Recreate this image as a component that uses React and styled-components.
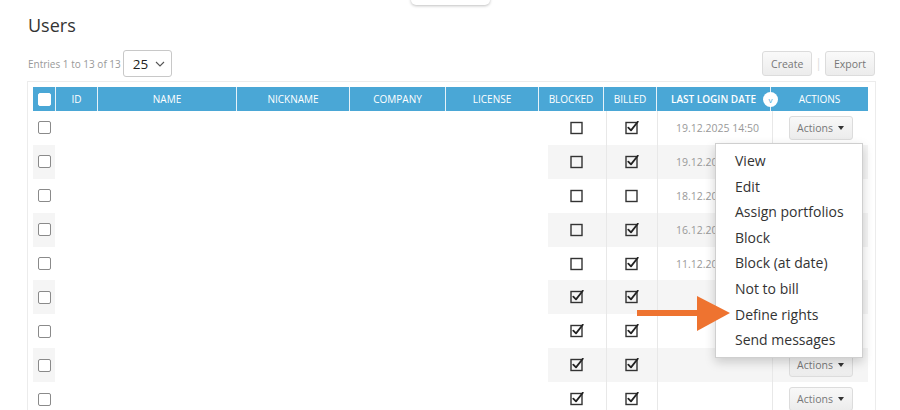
import React from "react";
import styled, { createGlobalStyle } from "styled-components";

const GlobalStyle = createGlobalStyle`
  html, body {
    margin: 0;
    padding: 0;
    background: #fff;
    font-family: "Open Sans", "Liberation Sans", sans-serif;
    color: #333;
    overflow: hidden;
  }
`;

const Page = styled.div`
  position: relative;
  width: 900px;
  height: 410px;
  overflow: hidden;
  padding: 0 24px 0 27px;
  box-sizing: border-box;
`;

const TopTab = styled.div`
  position: absolute;
  left: 411px;
  top: -6px;
  width: 79px;
  height: 11px;
  background: #fff;
  border-radius: 0 0 5px 5px;
  box-shadow: 0 1px 3px rgba(0, 0, 0, 0.25);
`;

const Title = styled.h1`
  margin: 0;
  padding: 13px 0 0 1px;
  font-size: 18px;
  font-weight: 400;
  line-height: 24px;
  color: #333;
`;

const Toolbar = styled.div`
  display: flex;
  align-items: center;
  justify-content: space-between;
  margin-top: 13px;
  height: 27px;
`;

const EntriesInfo = styled.div`
  display: flex;
  align-items: center;
  gap: 2px;
  font-size: 10px;
  color: #999;
  padding-left: 1px;
`;

const Select = styled.div`
  display: flex;
  align-items: center;
  justify-content: space-between;
  width: 49px;
  height: 27px;
  box-sizing: border-box;
  border: 1px solid #c8c8c8;
  border-radius: 3px;
  padding: 0 6px 0 9px;
  font-size: 13.5px;
  color: #222;
`;

const ButtonGroup = styled.div`
  display: flex;
  align-items: center;
  gap: 3px;
  margin-right: 1px;
`;

const Button = styled.div`
  display: flex;
  align-items: center;
  justify-content: center;
  height: 25px;
  padding: 0 8px;
  box-sizing: border-box;
  border: 1px solid #dcdcdc;
  border-radius: 3px;
  background: linear-gradient(#fafafa, #ececec);
  font-size: 10.5px;
  color: #777;
`;

const Sep = styled.span`
  color: #ddd;
  font-size: 12px;
`;

const Panel = styled.div`
  position: relative;
  margin-top: 4px;
  border: 1px solid #ececec;
  border-bottom: none;
  padding: 5px 7px 0 5px;
  height: 340px;
  box-sizing: border-box;
`;

const HeaderRow = styled.div`
  display: grid;
  grid-template-columns: 23px 42px 139px 113px 96px 93px 65px 53px 114px 97px;
  height: 24px;
  background: #4aa7d6;
`;

const HeadCell = styled.div`
  position: relative;
  display: flex;
  align-items: center;
  justify-content: center;
  border-right: ${({ $last }) => ($last ? "none" : "1px solid #e6f2f9")};
  font-size: 10px;
  font-weight: ${({ $bold }) => ($bold ? 600 : 400)};
  color: #fff;
`;

const SortBadge = styled.div`
  position: absolute;
  right: -8px;
  top: 5px;
  width: 15px;
  height: 15px;
  border-radius: 50%;
  background: #fff;
  color: #4aa7d6;
  font-size: 8px;
  font-weight: 400;
  display: flex;
  align-items: center;
  justify-content: center;
  z-index: 2;
`;

const Box = styled.span`
  display: inline-block;
  width: 13px;
  height: 13px;
  box-sizing: border-box;
  border: 1px solid ${({ $light }) => ($light ? "#fff" : "#8a8a8a")};
  background: #fff;
  border-radius: 2px;
`;

const BodyRow = styled.div`
  display: grid;
  grid-template-columns: 22px 493px 58px 51px 115px 96px;
  height: 33.9px;
`;

const Cell = styled.div`
  position: relative;
  display: flex;
  align-items: center;
  justify-content: ${({ $left }) => ($left ? "flex-start" : "center")};
  padding-left: ${({ $left }) => ($left ? "18px" : "0")};
  background: ${({ $striped, $blank }) => ($striped && !$blank ? "#f5f5f5" : "#fff")};
  border-left: ${({ $line }) => ($line ? "1px solid #e8e8e8" : "none")};
  font-size: 10.5px;
  color: #999;
  white-space: nowrap;
`;

const ActionsButton = styled(Button)`
  width: 64px;
  height: 24px;
  padding: 0;
  gap: 5px;
  background: linear-gradient(#f8f8f8, #ececec);
`;

const Caret = styled.span`
  width: 0;
  height: 0;
  border-left: 3.5px solid transparent;
  border-right: 3.5px solid transparent;
  border-top: 4px solid #333;
`;

const Menu = styled.ul`
  position: absolute;
  left: -58px;
  top: 32px;
  width: 146px;
  margin: 0;
  padding: 4px 0;
  list-style: none;
  background: #fff;
  border: 1px solid #cfcfcf;
  box-shadow: 0 4px 10px rgba(0, 0, 0, 0.18);
  z-index: 5;
`;

const MenuItem = styled.li`
  height: 25.6px;
  line-height: 25.6px;
  padding-left: 19px;
  font-size: 14px;
  color: #333;
`;

const Arrow = styled.svg`
  position: absolute;
  left: 636px;
  top: 295px;
  z-index: 10;
`;

const CheckIcon = ({ checked }) => (
  <svg width="14" height="14" viewBox="0 0 14 14">
    <rect x="1" y="1.5" width="11" height="11" fill="none" stroke="#333" strokeWidth="1.4" />
    {checked && (
      <path d="M3.3 6.6 L6 9.4 L12.8 0.8" fill="none" stroke="#222" strokeWidth="1.8" strokeLinecap="round" strokeLinejoin="round" />
    )}
  </svg>
);

const headers = ["", "ID", "NAME", "NICKNAME", "COMPANY", "LICENSE", "BLOCKED", "BILLED", "LAST LOGIN DATE", "ACTIONS"];

const rows = [
  { blocked: false, billed: true, date: "19.12.2025 14:50", action: true },
  { blocked: false, billed: true, date: "19.12.2025 11:02" },
  { blocked: false, billed: false, date: "18.12.2025 09:41" },
  { blocked: false, billed: true, date: "16.12.2025 16:20" },
  { blocked: false, billed: true, date: "11.12.2025 10:05" },
  { blocked: true, billed: true, date: "" },
  { blocked: true, billed: true, date: "" },
  { blocked: true, billed: true, date: "", action: true },
  { blocked: true, billed: true, date: "", action: true },
];

const menuItems = ["View", "Edit", "Assign portfolios", "Block", "Block (at date)", "Not to bill", "Define rights", "Send messages"];

export default function App() {
  return (
    <>
      <GlobalStyle />
      <Page>
        <TopTab />
        <Title>Users</Title>
        <Toolbar>
          <EntriesInfo>
            Entries 1 to 13 of 13
            <Select>
              <span>25</span>
              <svg width="10" height="6" viewBox="0 0 10 6">
                <path d="M1 1 L5 5 L9 1" fill="none" stroke="#555" strokeWidth="1.1" />
              </svg>
            </Select>
          </EntriesInfo>
          <ButtonGroup>
            <Button>Create</Button>
            <Sep>|</Sep>
            <Button>Export</Button>
          </ButtonGroup>
        </Toolbar>
        <Panel>
          <HeaderRow>
            {headers.map((h, i) => (
              <HeadCell key={i} $last={i === headers.length - 1} $bold={h === "LAST LOGIN DATE"}>
                {i === 0 ? <Box $light /> : h}
                {h === "LAST LOGIN DATE" && <SortBadge>v</SortBadge>}
              </HeadCell>
            ))}
          </HeaderRow>
          {rows.map((r, i) => {
            const striped = i % 2 === 1;
            return (
              <BodyRow key={i}>
                <Cell $striped={striped}>
                  <Box />
                </Cell>
                <Cell $blank />
                <Cell $striped={striped}>
                  <CheckIcon checked={r.blocked} />
                </Cell>
                <Cell $striped={striped} $line>
                  <CheckIcon checked={r.billed} />
                </Cell>
                <Cell $striped={striped} $line $left>
                  {r.date}
                </Cell>
                <Cell $striped={striped} $line>
                  {r.action && (
                    <ActionsButton>
                      Actions <Caret />
                    </ActionsButton>
                  )}
                  {i === 0 && (
                    <Menu>
                      {menuItems.map((m) => (
                        <MenuItem key={m}>{m}</MenuItem>
                      ))}
                    </Menu>
                  )}
                </Cell>
              </BodyRow>
            );
          })}
        </Panel>
        <Arrow width="96" height="38" viewBox="0 0 96 38">
          <rect x="1" y="15" width="62" height="6" fill="#ee7330" />
          <polygon points="61,1 94,18 61,36" fill="#ee7330" />
        </Arrow>
      </Page>
    </>
  );
}
